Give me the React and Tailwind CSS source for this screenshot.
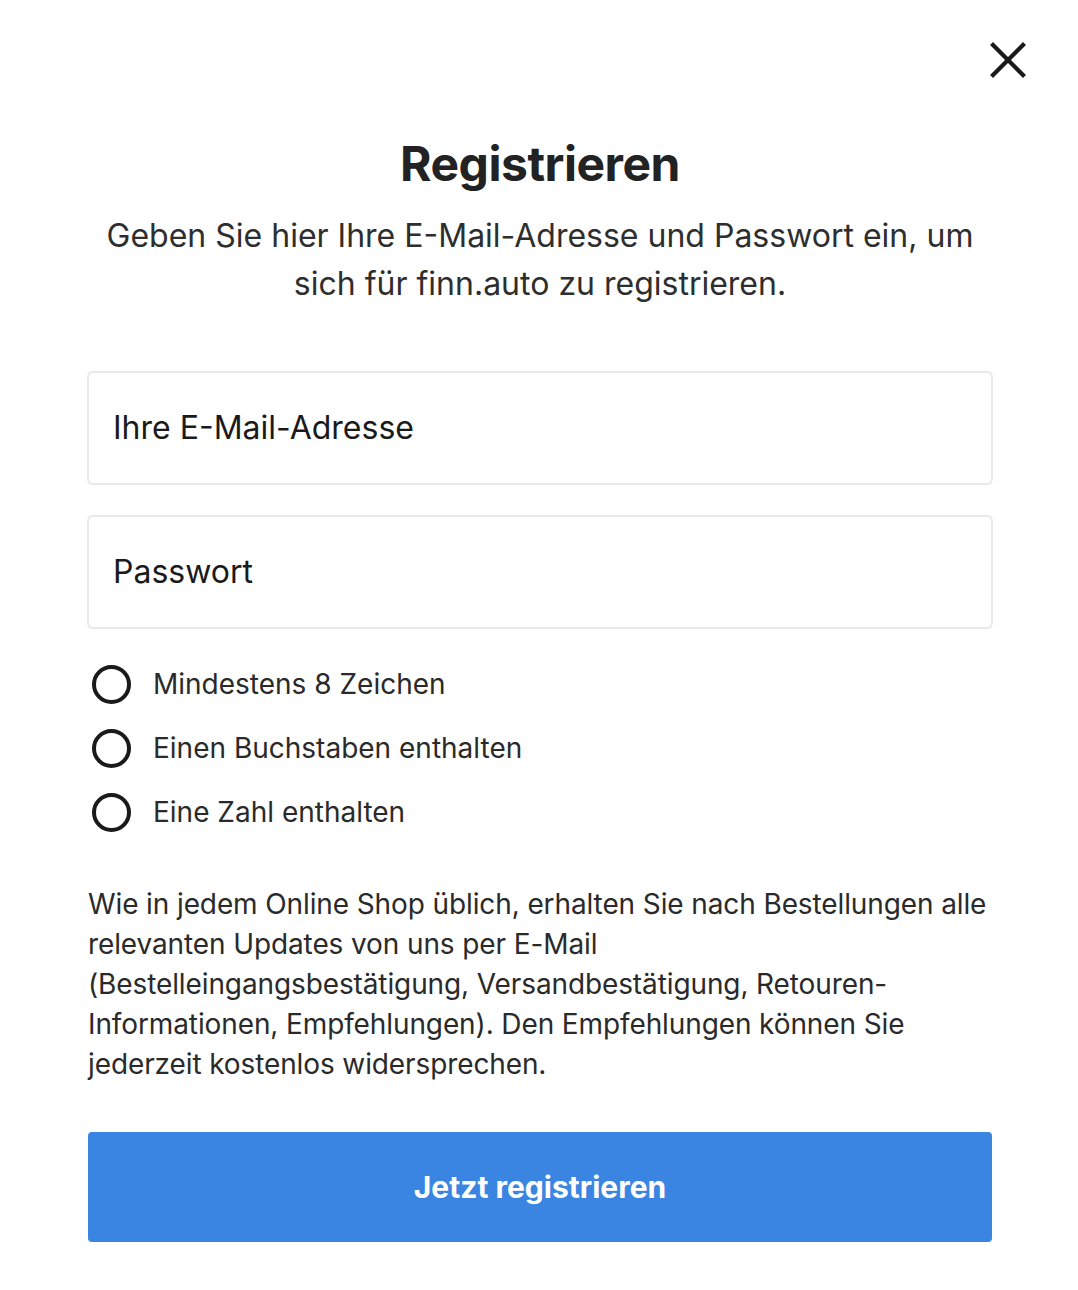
import React from 'react';

const requirements = ['Mindestens 8 Zeichen', 'Einen Buchstaben enthalten', 'Eine Zahl enthalten'];

export default function App() {
    return (
        <div className="w-full min-h-[1290px] bg-white text-[#222] font-['Inter',sans-serif] pl-[88px] pr-[86px]">
            <div className="flex justify-end pt-[42px] -mr-[34px]">
                <button className="w-9 h-9 flex items-center justify-center">
                    <svg width="36" height="36" viewBox="0 0 36 36" fill="none" stroke="#1a1a1a" strokeWidth="4.2" strokeLinecap="square">
                        <path d="M3 3L33 33M33 3L3 33" />
                    </svg>
                </button>
            </div>

            <h1 className="mt-[58px] text-center text-[48px] leading-[56px] font-bold tracking-[-0.01em] text-[#222]">Registrieren</h1>
            <p className="mt-[20px] text-center text-[32px] leading-[48px] text-[#2e2e2e]">
                Geben Sie hier Ihre E-Mail-Adresse und Passwort ein, um sich für finn.auto zu registrieren.
            </p>

            <div className="mt-[63px] flex flex-col gap-[30px] -mx-[1px]">
                <div className="h-[114px] border-2 border-[#e8e8e8] rounded-[6px] flex items-center pl-[24px] text-[32px] text-[#1a1a1a]">
                    Ihre E-Mail-Adresse
                </div>
                <div className="h-[114px] border-2 border-[#e8e8e8] rounded-[6px] flex items-center pl-[24px] text-[32px] text-[#1a1a1a]">
                    Passwort
                </div>
            </div>

            <ul className="mt-[23px] flex flex-col">
                {requirements.map(req => (
                    <li key={req} className="h-[64px] flex items-center gap-[22px] text-[28px] text-[#2a2a2a]">
                        <span className="w-[39px] h-[39px] ml-[4px] rounded-full border-4 border-[#1a1a1a] shrink-0"></span>
                        {req}
                    </li>
                ))}
            </ul>

            {/* line breaks kept as in the original layout */}
            <p className="mt-[40px] text-[28px] leading-[40px] tracking-[-0.004em] whitespace-nowrap text-[#2a2a2a]">
                Wie in jedem Online Shop üblich, erhalten Sie nach Bestellungen alle<br />
                relevanten Updates von uns per E-Mail<br />
                (Bestelleingangsbestätigung, Versandbestätigung, Retouren-<br />
                Informationen, Empfehlungen). Den Empfehlungen können Sie<br />
                jederzeit kostenlos widersprechen.
            </p>

            <button className="mt-[48px] w-full h-[110px] rounded-[4px] bg-[#3a85e2] text-white text-[30px] font-bold">
                Jetzt registrieren
            </button>
        </div>
    );
}
